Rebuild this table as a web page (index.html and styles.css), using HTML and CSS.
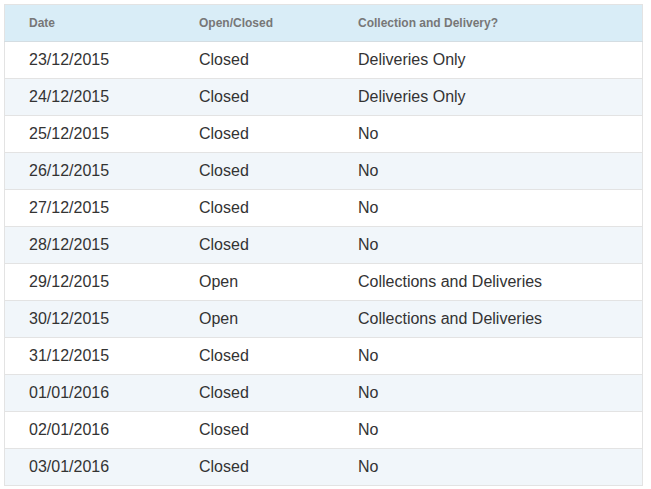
FILE: index.html
```html
<!DOCTYPE html>
<html>
<head>
<meta charset="utf-8">
<link rel="stylesheet" href="styles.css">
</head>
<body>
<table class="hours">
  <thead>
    <tr><th class="c1">Date</th><th class="c2">Open/Closed</th><th class="c3">Collection and Delivery?</th></tr>
  </thead>
  <tbody>
    <tr><td>23/12/2015</td><td>Closed</td><td>Deliveries Only</td></tr>
    <tr><td>24/12/2015</td><td>Closed</td><td>Deliveries Only</td></tr>
    <tr><td>25/12/2015</td><td>Closed</td><td>No</td></tr>
    <tr><td>26/12/2015</td><td>Closed</td><td>No</td></tr>
    <tr><td>27/12/2015</td><td>Closed</td><td>No</td></tr>
    <tr><td>28/12/2015</td><td>Closed</td><td>No</td></tr>
    <tr><td>29/12/2015</td><td>Open</td><td>Collections and Deliveries</td></tr>
    <tr><td>30/12/2015</td><td>Open</td><td>Collections and Deliveries</td></tr>
    <tr><td>31/12/2015</td><td>Closed</td><td>No</td></tr>
    <tr><td>01/01/2016</td><td>Closed</td><td>No</td></tr>
    <tr><td>02/01/2016</td><td>Closed</td><td>No</td></tr>
    <tr><td>03/01/2016</td><td>Closed</td><td>No</td></tr>
  </tbody>
</table>
</body>
</html>
```
FILE: styles.css
```css
html, body {
  margin: 0;
  padding: 0;
  background: #fff;
}
body {
  padding: 4px 8px 0 4px;
  font-family: "Liberation Sans", Arial, sans-serif;
}
.hours {
  width: 639px;
  border-collapse: collapse;
  border: 1px solid #e3e3e3;
  color: #333;
}
.hours th {
  background: #d9edf7;
  color: #777;
  font-size: 12px;
  font-weight: bold;
  text-align: left;
  height: 36px;
  padding: 0 0 0 24px;
  border-bottom: 1px solid #d4dde2;
}
.hours th.c1 { width: 146px; }
.hours th.c2 { width: 135px; }
.hours td {
  font-size: 16px;
  height: 36px;
  padding: 0 0 0 24px;
  border-top: 1px solid #e3e3e3;
}
.hours tbody tr:nth-child(even) td {
  background: #f1f6fa;
}
```
